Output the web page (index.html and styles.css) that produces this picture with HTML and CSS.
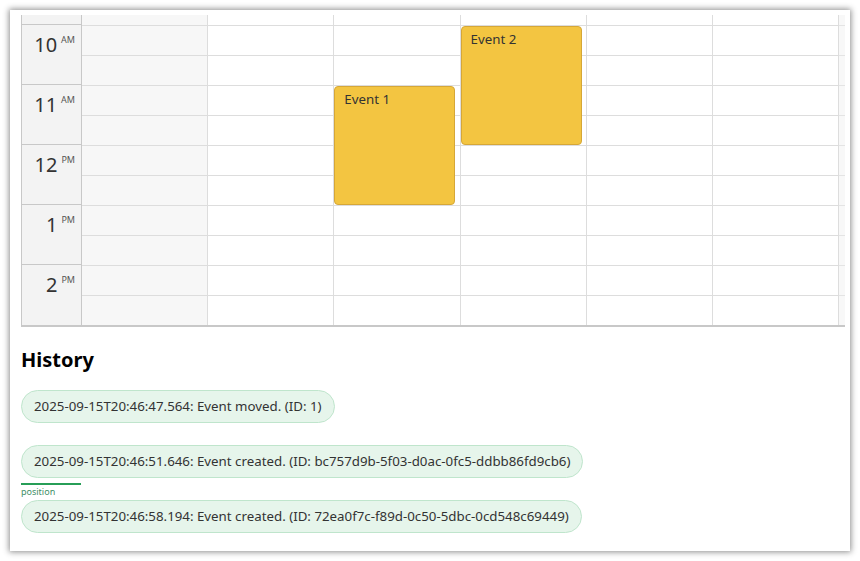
FILE: index.html
```html
<!DOCTYPE html>
<html lang="en">
<head>
    <meta charset="UTF-8">
    <title>Scheduler History</title>
    <link rel="stylesheet" href="styles.css">
</head>
<body>
    <div class="frame">
        <div class="scheduler">
            <div class="hours">
                <div class="hourTop"></div>
                <div class="hour">10<span>AM</span></div>
                <div class="hour">11<span>AM</span></div>
                <div class="hour">12<span>PM</span></div>
                <div class="hour">1<span>PM</span></div>
                <div class="hour">2<span>PM</span></div>
            </div>
            <div class="days">
                <div class="day off"></div>
                <div class="day"></div>
                <div class="day">
                    <div class="event event1">Event 1</div>
                </div>
                <div class="day">
                    <div class="event event2">Event 2</div>
                </div>
                <div class="day"></div>
                <div class="day"></div>
            </div>
            <div class="gutter"></div>
        </div>

        <h2 class="title">History</h2>
        <div class="history">
            <div class="item">2025-09-15T20:46:47.564: Event moved. (ID: 1)</div>
            <div class="item">2025-09-15T20:46:51.646: Event created. (ID: bc757d9b-5f03-d0ac-0fc5-ddbb86fd9cb6)</div>
            <div class="item">
                <div class="marker"><span>position</span></div>
                2025-09-15T20:46:58.194: Event created. (ID: 72ea0f7c-f89d-0c50-5dbc-0cd548c69449)
            </div>
        </div>
    </div>
</body>
</html>
```

FILE: styles.css
```css
body {
    margin: 0;
    background: #fff;
    font-family: "Noto Sans", "Open Sans", sans-serif;
    color: #333;
}

.frame {
    margin: 10px;
    width: 840px;
    height: 541px;
    box-sizing: border-box;
    padding: 5px 5px 0 11px;
    background: #fff;
    box-shadow: 0 0 6px 1px rgba(0, 0, 0, 0.45);
    overflow: hidden;
}

.scheduler {
    display: flex;
    height: 310px;
    border-bottom: 2px solid #c8c8c8;
    overflow: hidden;
}

.hours {
    width: 59px;
    background: #f3f3f3;
    border-left: 1px solid #c8c8c8;
    border-right: 1px solid #c8c8c8;
}

.hourTop {
    height: 9px;
}

.hour {
    height: 56px;
    padding-top: 3px;
    border-top: 1px solid #c8c8c8;
    text-align: right;
    padding-right: 6px;
    font-size: 20px;
    line-height: 34px;
    color: #333;
}

.hour span {
    font-size: 9px;
    vertical-align: top;
    line-height: 24px;
    margin-left: 4px;
    color: #555;
}

.days {
    display: flex;
    width: 757px;
}

.day {
    flex: 1;
    position: relative;
    border-right: 1px solid #ddd;
    background-image: repeating-linear-gradient(to bottom, transparent 0, transparent 29px, #ddd 29px, #ddd 30px);
    background-position: 0 -19px;
}

.day.off {
    background-color: #f7f7f7;
}

.gutter {
    width: 6px;
    background-color: #f8f8f8;
    background-image: repeating-linear-gradient(to bottom, transparent 0, transparent 29px, #e4e4e4 29px, #e4e4e4 30px);
    background-position: 0 -19px;
}

.event {
    position: absolute;
    left: 0;
    width: 121px;
    height: 119px;
    box-sizing: border-box;
    padding: 3px 9px;
    background: #f3c541;
    border: 1px solid #d6a737;
    border-radius: 4px;
    font-size: 13.3px;
    color: #333;
}

.event1 {
    top: 71px;
}

.event2 {
    top: 11px;
}

.title {
    margin: 19px 0 17px;
    font-size: 20px;
    font-weight: bold;
    color: #000;
}

.history {
    display: flex;
    flex-direction: column;
    align-items: flex-start;
    gap: 22px;
}

.item {
    position: relative;
    height: 31px;
    line-height: 31px;
    padding: 0 12px;
    background: #e6f5eb;
    border: 1px solid #bfe5cc;
    border-radius: 17px;
    font-size: 13.3px;
    color: #333;
}

.marker {
    position: absolute;
    left: -1px;
    top: -18px;
    width: 60px;
    height: 2px;
    background: #279e57;
}

.marker span {
    position: absolute;
    top: 3px;
    left: 0;
    font-size: 9px;
    line-height: 12px;
    color: #3f8f68;
}
```
